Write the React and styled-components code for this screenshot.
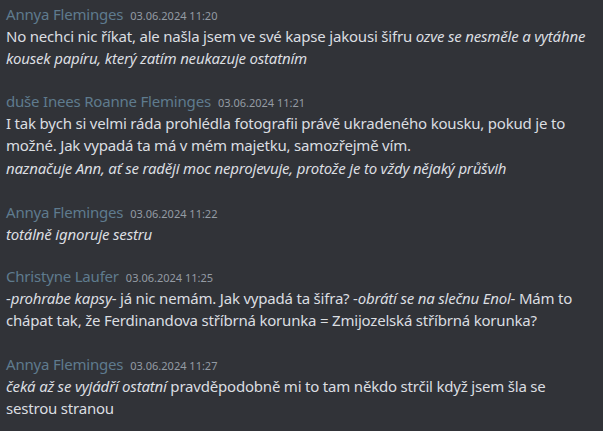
import styled, { createGlobalStyle } from "styled-components";

const Global = createGlobalStyle`
  html, body {
    margin: 0;
    padding: 0;
    background: #313338;
  }
`;

const Chat = styled.div`
  width: 603px;
  height: 431px;
  overflow: hidden;
  box-sizing: border-box;
  padding: 3px 6px 0 6px;
  background: #313338;
  font-family: "Noto Sans", "Open Sans", sans-serif;
  color: #dbdee1;
`;

const Group = styled.div`
  margin-top: ${(p) => p.$gap || 0}px;
`;

const Header = styled.div`
  display: flex;
  align-items: baseline;
  height: 22px;
  line-height: 22px;
`;

const Name = styled.span`
  font-size: 15px;
  letter-spacing: -0.2px;
  color: #5f7b8e;
  margin-right: 7px;
`;

const Time = styled.span`
  font-size: 11px;
  color: #949ba4;
`;

const Text = styled.div`
  font-size: 15px;
  line-height: 22px;
  margin-top: ${(p) => p.$gap || 0}px;
  letter-spacing: -0.2px;
  em {
    font-style: italic;
  }
`;

const messages = [
  {
    name: "Annya Fleminges",
    time: "03.06.2024 11:20",
    gap: 0,
    lines: [
      <>
        No nechci nic říkat, ale našla jsem ve své kapse jakousi šifru{" "}
        <em>ozve se nesměle a vytáhne kousek papíru, který zatím neukazuje ostatním</em>
      </>,
    ],
  },
  {
    name: "duše Inees Roanne Fleminges",
    time: "03.06.2024 11:21",
    gap: 21,
    lines: [
      <>
        I tak bych si velmi ráda prohlédla fotografii právě ukradeného kousku, pokud je to
        možné. Jak vypadá ta má v mém majetku, samozřejmě vím.
      </>,
      <em>naznačuje Ann, ať se raději moc neprojevuje, protože je to vždy nějaký průšvih</em>,
    ],
  },
  {
    name: "Annya Fleminges",
    time: "03.06.2024 11:22",
    gap: 22,
    lines: [<em>totálně ignoruje sestru</em>],
  },
  {
    name: "Christyne Laufer",
    time: "03.06.2024 11:25",
    gap: 20,
    lines: [
      <>
        -<em>prohrabe kapsy</em>- já nic nemám. Jak vypadá ta šifra? -
        <em>obrátí se na slečnu Enol</em>- Mám to chápat tak, že Ferdinandova stříbrná
        korunka = Zmijozelská stříbrná korunka?
      </>,
    ],
  },
  {
    name: "Annya Fleminges",
    time: "03.06.2024 11:27",
    gap: 22,
    lines: [
      <>
        <em>čeká až se vyjádří ostatní</em> pravděpodobně mi to tam někdo strčil když jsem
        šla se sestrou stranou
      </>,
    ],
  },
];

export default function App() {
  return (
    <>
      <Global />
      <Chat>
        {messages.map((m, i) => (
          <Group key={i} $gap={m.gap}>
            <Header>
              <Name>{m.name}</Name>
              <Time>{m.time}</Time>
            </Header>
            {m.lines.map((l, j) => (
              <Text key={j} $gap={j > 0 ? 1 : 0}>
                {l}
              </Text>
            ))}
          </Group>
        ))}
      </Chat>
    </>
  );
}
